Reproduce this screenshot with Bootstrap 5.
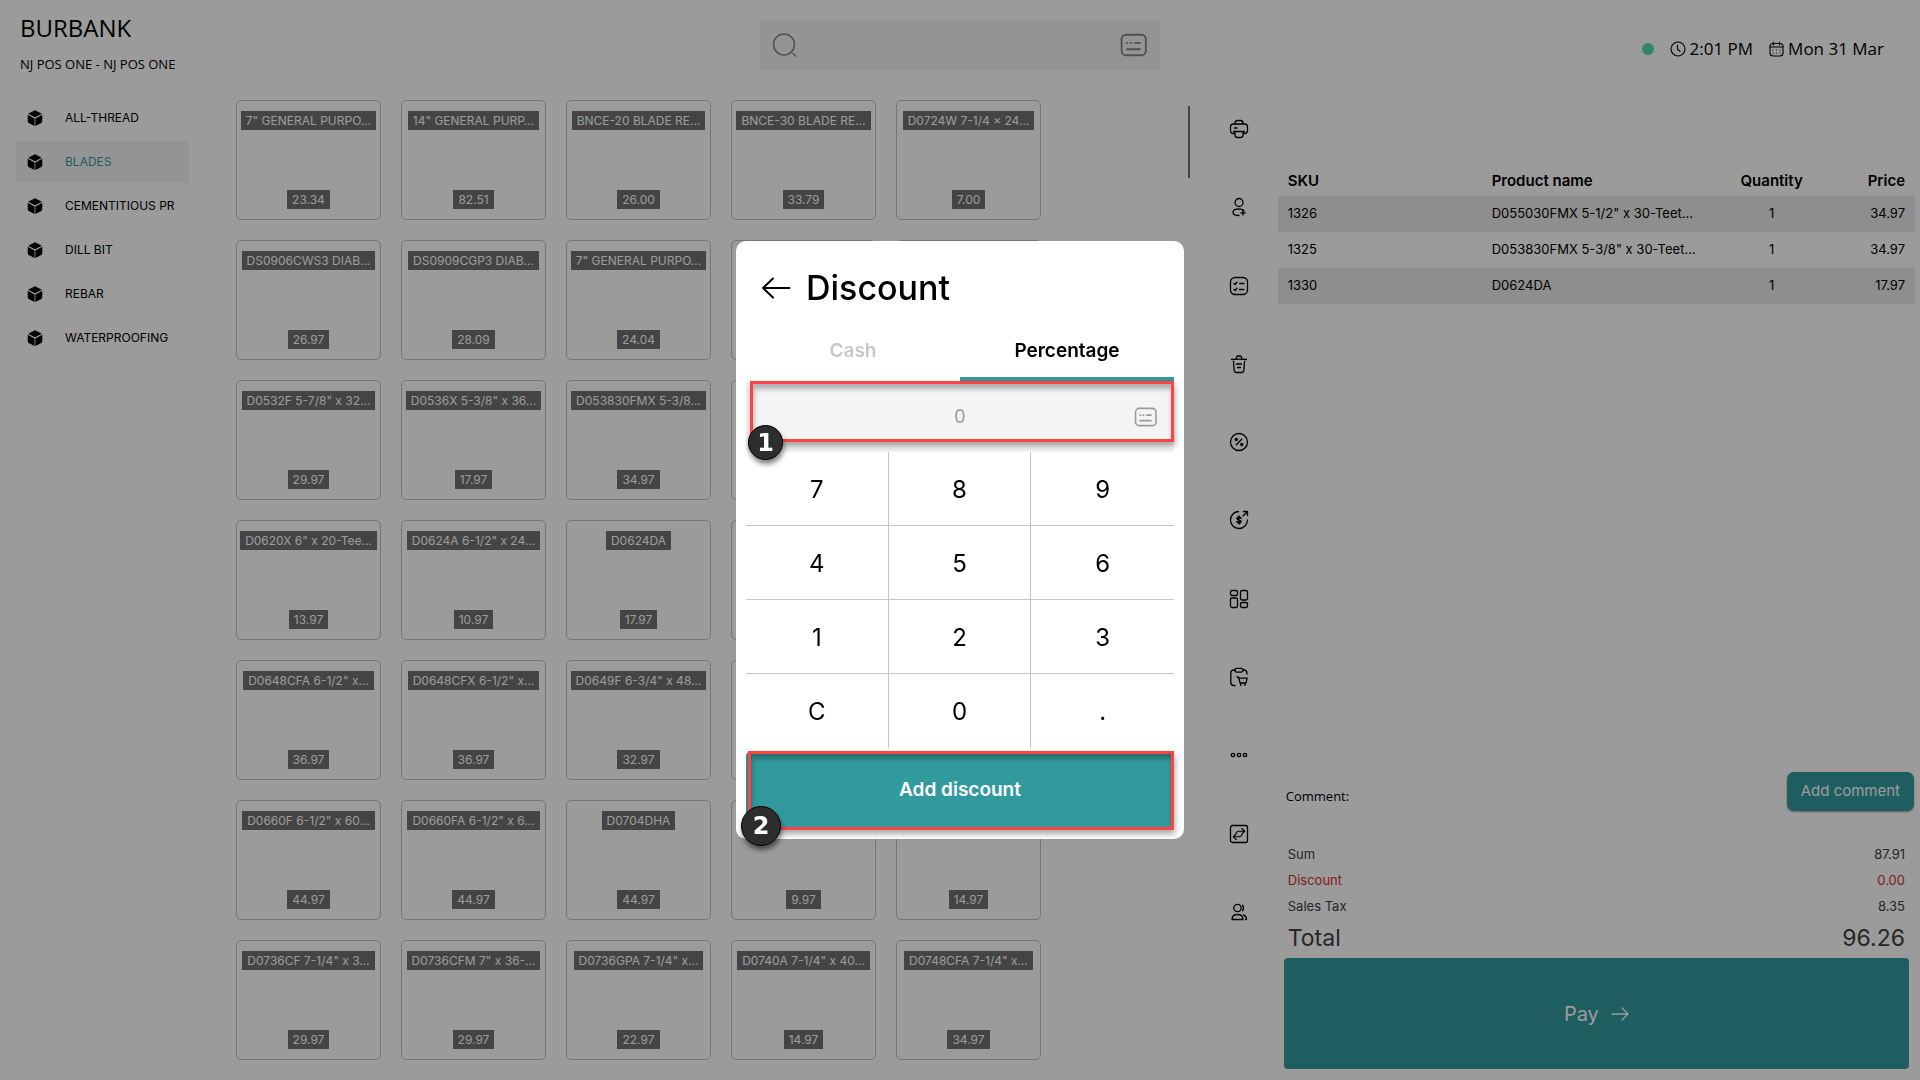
<!DOCTYPE html>
<html lang="en">
<head>
<meta charset="utf-8">
<meta name="viewport" content="width=device-width, initial-scale=1">
<title>Burbank POS</title>
<link href="https://cdn.jsdelivr.net/npm/bootstrap@5.3.0/dist/css/bootstrap.min.css" rel="stylesheet">
<style>
:root { --teal: #329a9f; --ui: Inter, "Liberation Sans", sans-serif; --sys: "Open Sans", "Noto Sans", sans-serif; }
body { font-family: var(--ui); font-size: 12px; color: #000; background: #fff; }
button { font-family: inherit; }
svg { display: block; fill: none; stroke: currentColor; stroke-linecap: round; stroke-linejoin: round; }
.app { min-height: 100vh; height: 100vh; overflow: hidden; }
.topbar { display: grid; grid-template-columns: minmax(0,1fr) 400px minmax(0,1fr); height: 90px; }
.brand { font: 400 24px/32px var(--sys); margin: 0; }
.store { font: 400 13px/24px var(--sys); }
.searchbox { background: #f4f4f4; height: 50px; border-radius: 4px; color: #828282; }
.searchbox input { background: transparent; border: 0; outline: 0; min-width: 0; }
.status { font: 400 17px/24px var(--sys); height: 98px; }
.dot { width: 12px; height: 12px; border-radius: 50%; background: #54d9b4; }
.sidebar { width: 211px; border-right: 1px solid #f4f4f4; padding: 7px 21px 0 16px; gap: 2px; }
.cat { display: flex; align-items: center; height: 42px; padding: 0 15px 0 11px; gap: 22px; color: #000; text-decoration: none; white-space: nowrap; }
.cat span { overflow: hidden; }
.cat.active { background: #f4f4f4; color: var(--teal); }
.cat svg { width: 16px; height: 16px; flex: none; color: #000; }
.products { padding: 10px 0 0 25px; gap: 20px; }
.tile { width: 145px; height: 120px; border: 1px solid #c2c2c2; border-radius: 5px; background: #fff; padding: 10px 0; display: flex; flex-direction: column; align-items: center; justify-content: space-between; }
.tile span { background: #707070; color: #fff; padding: 0 5px; line-height: 19px; white-space: nowrap; }
.thumb { width: 2px; height: 72px; margin: 16px 10px 0 0; background: #707070; flex: none; }
.rail { width: 78px; height: 861px; flex: none; }
.rail button { border: 0; background: none; padding: 4px; color: #000; }
.rail svg { width: 20px; height: 20px; stroke-width: 1.3; }
.cart { width: 33.45%; flex: none; padding: 74px 5px 11px 0; }
.lines { width: 100%; table-layout: fixed; }
.lines th { font-size: 15px; font-weight: 600; height: 32px; padding: 2px 10px 0; white-space: nowrap; }
.lines td { font-size: 13px; height: 36px; padding: 0 10px; white-space: nowrap; }
.lines tbody tr:nth-child(odd) { background: #eaeaea; }
.note { font: 400 13px/18px var(--sys); }
.btn-teal { background: var(--teal); color: #fff; border: 0; }
.btn-teal:hover { background: #2b878b; color: #fff; }
.add-note { font-size: 15px; height: 39px; padding: 0 14px; margin-right: 1px; border-radius: 7px; box-shadow: 0 1px 2px rgba(0,0,0,.4); }
.sums { padding: 30px 10px 0; font-size: 13px; line-height: 26px; color: #404040; }
.grand { font-size: 23px; line-height: 38px; }
.discount-line { color: #d22f35; }
.pay { height: 111px; margin: 1px 6px 0; border-radius: 4px; font-size: 20px; }
.shade { --bs-backdrop-opacity: .392; }
.discount { width: 448px; max-width: 100%; }
.discount .modal-content { border: 0; border-radius: 10px; padding: 10px; color: #000; }
.head { height: 74px; padding-left: 15px; gap: 15px; }
.head h1 { font-size: 34px; font-weight: 500; line-height: 44px; margin: 0; }
.head button { border: 0; background: none; padding: 0; color: #000; }
.tabs button { height: 56px; border: 0; border-bottom: 4px solid transparent; background: none; font-size: 19px; font-weight: 600; color: #c8c8c8; }
.tabs button.active { color: #000; border-color: var(--teal); }
.amount { height: 71px; background: #f4f4f4; color: #999; border-radius: 4px; }
.amount input { border: 0; outline: 0; background: transparent; text-align: center; font-size: 18px; }
.amount input::placeholder { color: #999; opacity: 1; }
.amount svg { position: absolute; right: 16px; top: 26px; }
.keys { display: grid; grid-template-columns: repeat(3, minmax(0,1fr)); grid-auto-rows: 74px; }
.keys button { border: 0 solid #c6c6c6; border-width: 0 1px 1px 0; background: none; font-size: 24px; color: #000; padding: 2px 0 0; }
.keys button:nth-child(3n) { border-right: 0; }
.keys button:nth-child(n+10) { border-bottom: 0; }
.submit { height: 77px; margin-top: 4px; border-radius: 4px; font-size: 19px; font-weight: 600; }
.frame { position: absolute; border: 3px solid #ff4343; pointer-events: none; box-shadow: 1px 4px 6px rgba(0,0,0,.35), inset 1px 5px 5px rgba(0,0,0,.28); }
.frame-input { inset: 0 0 10px 4px; }
.frame-submit { inset: 3px 0 -1px 2px; }
.step { position: absolute; border-radius: 50%; background: #2d2d2d; border: 1px solid #000; color: #fff; font: 700 24px/1 "DejaVu Sans", sans-serif; display: flex; align-items: center; justify-content: center; box-shadow: 1px 4px 5px rgba(0,0,0,.5); }
.step-1 { width: 35px; height: 35px; left: 2px; bottom: -8px; }
.step-2 { width: 40px; height: 40px; left: -5px; bottom: -17px; }
</style>
</head>
<body>
<svg width="0" height="0" class="position-absolute" aria-hidden="true">
  <symbol id="cube" viewBox="0 0 16 16"><path d="M8 .2 14.800 3.700 8 7.300 1.200 3.700z M.7 4.700 7.600 8.400V15.900L1.700 13Q.7 12.400 .7 11z M15.300 4.700 8.400 8.400V15.900L14.300 13Q15.300 12.400 15.300 11z" fill="currentColor" stroke="none"/></symbol>
  <symbol id="keyboard" viewBox="0 0 26 22"><rect x="1.500" y="1.500" width="22.500" height="19" rx="4" stroke-width="1.700"/><path d="M6.500 9h.6M10 9h.6M14 9h4.500M6.500 15h12" stroke-width="1.800"/></symbol>
</svg>

<div class="app d-flex flex-column">
  <header class="topbar">
    <div class="ps-3 ms-1 pt-2 mt-1">
      <h1 class="brand">BURBANK</h1>
      <div class="store mt-2">NJ POS ONE - NJ POS ONE</div>
    </div>
    <div class="align-self-start pt-3"><div class="searchbox mt-1 px-2 d-flex align-items-center">
      <svg class="ms-1" width="26" height="26" viewBox="0 0 26 26" stroke-width="1.500"><circle cx="12" cy="12.500" r="10.500"/><path d="m21 21.500 2.500 2.500"/></svg>
      <input class="flex-grow-1" type="search" aria-label="Search products">
      <svg class="me-1" width="28" height="24"><use href="#keyboard"/></svg>
    </div></div>
    <div class="status d-flex justify-content-end align-items-center align-self-start pe-3 me-3">
      <span class="dot me-3"></span>
      <svg class="me-1" width="16" height="16" viewBox="0 0 16 16" stroke-width="1.100"><circle cx="8" cy="8" r="7"/><path d="M7.500 4v4.300l2.500 2"/></svg>
      <span>2:01 PM</span>
      <svg class="ms-3 me-1" width="15" height="16" viewBox="0 0 15 16" stroke-width="1.100"><rect x="1" y="2.500" width="13" height="12.500" rx="3"/><path d="M4.500 1v3M10.500 1v3M1 6h13M4 9h.1M7.500 9h.1M11 9h.1M4 12h.1M7.500 12h.1M11 12h.1"/></svg>
      <span class="me-1">Mon 31 Mar</span>
    </div>
  </header>

  <main class="d-flex flex-grow-1 overflow-hidden">
    <nav class="sidebar d-flex flex-column flex-shrink-0" aria-label="Categories">
      <a class="cat" href="#"><svg><use href="#cube"/></svg><span>ALL-THREAD</span></a>
      <a class="cat active" href="#"><svg><use href="#cube"/></svg><span>BLADES</span></a>
      <a class="cat" href="#"><svg><use href="#cube"/></svg><span>CEMENTITIOUS PR</span></a>
      <a class="cat" href="#"><svg><use href="#cube"/></svg><span>DILL BIT</span></a>
      <a class="cat" href="#"><svg><use href="#cube"/></svg><span>REBAR</span></a>
      <a class="cat" href="#"><svg><use href="#cube"/></svg><span>WATERPROOFING</span></a>
    </nav>

    <section class="products d-flex flex-wrap align-content-start flex-grow-1" aria-label="Products">
      <button class="tile"><span>7" GENERAL PURPO…</span><span>23.34</span></button>
      <button class="tile"><span>14" GENERAL PURP…</span><span>82.51</span></button>
      <button class="tile"><span>BNCE-20 BLADE RE…</span><span>26.00</span></button>
      <button class="tile"><span>BNCE-30 BLADE RE…</span><span>33.79</span></button>
      <button class="tile"><span>D0724W 7-1/4 × 24…</span><span>7.00</span></button>
      <button class="tile"><span>DS0906CWS3 DIAB…</span><span>26.97</span></button>
      <button class="tile"><span>DS0909CGP3 DIAB…</span><span>28.09</span></button>
      <button class="tile"><span>7" GENERAL PURPO…</span><span>24.04</span></button>
      <button class="tile" aria-label="Product"></button>
      <button class="tile" aria-label="Product"></button>
      <button class="tile"><span>D0532F 5-7/8" x 32…</span><span>29.97</span></button>
      <button class="tile"><span>D0536X 5-3/8" x 36…</span><span>17.97</span></button>
      <button class="tile"><span>D053830FMX 5-3/8…</span><span>34.97</span></button>
      <button class="tile" aria-label="Product"></button>
      <button class="tile" aria-label="Product"></button>
      <button class="tile"><span>D0620X 6" x 20-Tee…</span><span>13.97</span></button>
      <button class="tile"><span>D0624A 6-1/2" x 24…</span><span>10.97</span></button>
      <button class="tile"><span>D0624DA</span><span>17.97</span></button>
      <button class="tile" aria-label="Product"></button>
      <button class="tile" aria-label="Product"></button>
      <button class="tile"><span>D0648CFA 6-1/2" x…</span><span>36.97</span></button>
      <button class="tile"><span>D0648CFX 6-1/2" x…</span><span>36.97</span></button>
      <button class="tile"><span>D0649F 6-3/4" x 48…</span><span>32.97</span></button>
      <button class="tile" aria-label="Product"></button>
      <button class="tile" aria-label="Product"></button>
      <button class="tile"><span>D0660F 6-1/2" x 60…</span><span>44.97</span></button>
      <button class="tile"><span>D0660FA 6-1/2" x 6…</span><span>44.97</span></button>
      <button class="tile"><span>D0704DHA</span><span>44.97</span></button>
      <button class="tile justify-content-end"><span>9.97</span></button>
      <button class="tile justify-content-end"><span>14.97</span></button>
      <button class="tile"><span>D0736CF 7-1/4" x 3…</span><span>29.97</span></button>
      <button class="tile"><span>D0736CFM 7" x 36-…</span><span>29.97</span></button>
      <button class="tile"><span>D0736GPA 7-1/4" x…</span><span>22.97</span></button>
      <button class="tile"><span>D0740A 7-1/4" x 40…</span><span>14.97</span></button>
      <button class="tile"><span>D0748CFA 7-1/4" x…</span><span>34.97</span></button>
    </section>
    <div class="thumb"></div>

    <div class="rail d-flex flex-column align-items-center justify-content-around">
      <button aria-label="Print"><svg viewBox="0 0 20 20"><path d="M6 5V4q0-2.500 2.500-2.500h3Q14 1.500 14 4v1M5.500 14.500h-1q-3 0-3-3V8q0-3 3-3h11q3 0 3 3v3.500q0 3-3 3h-1M4.500 12.500h11M6 12.500V16q0 2.500 2.500 2.500h3Q14 18.500 14 16v-3.500M5.500 9H8"/></svg></button>
      <button aria-label="Add customer"><svg viewBox="0 0 20 20"><circle cx="10" cy="5.500" r="4"/><path d="M15 13.500Q13 11.800 10 11.800q-6 .2-6 3.400T10 18.500M14 13.500v4.500M11.800 15.800h4.500"/></svg></button>
      <button aria-label="Orders"><svg viewBox="0 0 20 20"><rect x="1.500" y="1.500" width="17" height="17" rx="4.500"/><path d="M10.500 7.500H15M10.500 13.500H15M5 7.500l1 1 2-2.200M5 13.500l1 1 2-2.200"/></svg></button>
      <button aria-label="Delete"><svg viewBox="0 0 20 20"><path d="M2.500 5.500q7.500-.8 15 0M7 5l.6-2q.2-1 1.200-1h2.400q1 0 1.200 1l.6 2M4.500 7.500l.6 8.500q.2 2.500 2.400 2.500h5q2.200 0 2.400-2.500l.6-8.500M7.500 10h5M8.500 13.500h3"/></svg></button>
      <button aria-label="Discount"><svg viewBox="0 0 20 20"><circle cx="10" cy="10" r="8.500"/><path d="m7.300 12.800 5.400-5.600"/><g stroke-width="1.600"><circle cx="7.300" cy="7.500" r=".9"/><circle cx="12.800" cy="12.500" r=".9"/></g></svg></button>
      <button aria-label="Refund"><svg viewBox="0 0 20 20"><path d="M9.500 1.500A8.500 8.500 0 1 0 18.500 10M14 6l4.500-4.500M14.500 1.500h4v4"/><path d="M12 8.200Q11.300 7.300 10 7.300q-2 0-2 1.300T10 10t2 1.500-2 1.300q-1.400 0-2.200-1M10 6v8" stroke-width="1.500"/></svg></button>
      <button aria-label="Layout"><svg viewBox="0 0 20 20"><rect x="1.500" y="1.500" width="7" height="5" rx="1.500"/><rect x="1.500" y="9" width="7" height="9.500" rx="1.500"/><rect x="11.500" y="1.500" width="7" height="9.500" rx="1.500"/><rect x="11.500" y="13.500" width="7" height="5" rx="1.500"/></svg></button>
      <button aria-label="Parked sales"><svg viewBox="0 0 20 20"><path d="M6 3H5Q1.800 3 1.800 6v9.500q0 3 3 3H6M14 3h1q3 0 3 4"/><rect x="6" y="1.300" width="8" height="3.800" rx="1.500"/><path d="M8 10h1.500l1.500 6h6l1.200-4.800h-8M11.800 16v2.500M16 16v2.500"/></svg></button>
      <button aria-label="More"><svg viewBox="0 0 20 20" stroke-width="1.500"><circle cx="4" cy="10" r="1.700"/><circle cx="10" cy="10" r="1.700"/><circle cx="16" cy="10" r="1.700"/></svg></button>
      <button aria-label="Exchange"><svg viewBox="0 0 20 20"><rect x="1.500" y="1.500" width="17" height="17" rx="2"/><path d="M7 9.500Q7.500 7.300 10 7.300h5.500M12.800 4.500l3 2.800-3 2.700M13 10.500q-.5 2.200-3 2.200H4.500M7.200 10l-3 2.700 3 2.800" stroke-width="1.100"/></svg></button>
      <button aria-label="Customers"><svg viewBox="0 0 20 20"><circle cx="8.500" cy="6" r="3.700"/><path d="M13.500 3.200q2 2.800 0 5.600M3 17.500q0-5 5.500-5t5.500 5zM14.500 12.800q3 1 3 4.700h-1"/></svg></button>
    </div>

    <aside class="cart d-flex flex-column">
      <table class="lines">
        <colgroup><col style="width:32%"><col style="width:38%"><col style="width:15%"><col style="width:15%"></colgroup>
        <thead><tr><th>SKU</th><th>Product name</th><th class="text-center">Quantity</th><th class="text-end">Price</th></tr></thead>
        <tbody>
          <tr><td>1326</td><td>D055030FMX 5-1/2" x 30-Teet…</td><td class="text-center">1</td><td class="text-end">34.97</td></tr>
          <tr><td>1325</td><td>D053830FMX 5-3/8" x 30-Teet…</td><td class="text-center">1</td><td class="text-end">34.97</td></tr>
          <tr><td>1330</td><td>D0624DA</td><td class="text-center">1</td><td class="text-end">17.97</td></tr>
        </tbody>
      </table>
      <div class="mt-auto d-flex justify-content-between align-items-center ps-2">
        <span class="note pt-2">Comment:</span>
        <button class="btn btn-teal add-note">Add comment</button>
      </div>
      <div class="sums">
        <div class="d-flex justify-content-between"><span>Sum</span><span>87.91</span></div>
        <div class="d-flex justify-content-between discount-line"><span>Discount</span><span>0.00</span></div>
        <div class="d-flex justify-content-between"><span>Sales Tax</span><span>8.35</span></div>
        <div class="d-flex justify-content-between grand"><span>Total</span><span>96.26</span></div>
      </div>
      <button class="btn btn-teal pay d-flex align-items-center justify-content-center gap-2 flex-shrink-0">Pay
        <svg class="ms-1" width="18" height="18" viewBox="0 0 18 18" stroke-width="1.400"><path d="M1 9h16M11 3l6 6-6 6"/></svg>
      </button>
    </aside>
  </main>
</div>

<div class="modal-backdrop shade show"></div>
<div class="modal d-block" role="dialog" aria-labelledby="discountTitle">
  <div class="modal-dialog modal-dialog-centered discount">
    <div class="modal-content">
      <div class="head d-flex align-items-center">
        <button aria-label="Back"><svg width="30" height="22" viewBox="0 0 30 22" stroke-width="2"><path d="M28.500 11H2M12 1.500 2 11l10 9.500"/></svg></button>
        <h1 id="discountTitle">Discount</h1>
      </div>
      <div class="tabs d-flex" role="tablist">
        <button class="col-6" role="tab" aria-selected="false">Cash</button>
        <button class="col-6 active" role="tab" aria-selected="true">Percentage</button>
      </div>
      <div class="amount position-relative d-flex">
        <input class="w-100" type="text" placeholder="0" aria-label="Discount percentage">
        <svg width="24" height="20"><use href="#keyboard"/></svg>
        <span class="frame frame-input"></span>
        <span class="step step-1">1</span>
      </div>
      <div class="keys">
        <button>7</button><button>8</button><button>9</button>
        <button>4</button><button>5</button><button>6</button>
        <button>1</button><button>2</button><button>3</button>
        <button>C</button><button>0</button><button>.</button>
      </div>
      <div class="position-relative d-grid">
        <button class="btn btn-teal submit">Add discount</button>
        <span class="frame frame-submit"></span>
        <span class="step step-2">2</span>
      </div>
    </div>
  </div>
</div>
<script src="https://cdn.jsdelivr.net/npm/bootstrap@5.3.0/dist/js/bootstrap.bundle.min.js"></script>
</body>
</html>
